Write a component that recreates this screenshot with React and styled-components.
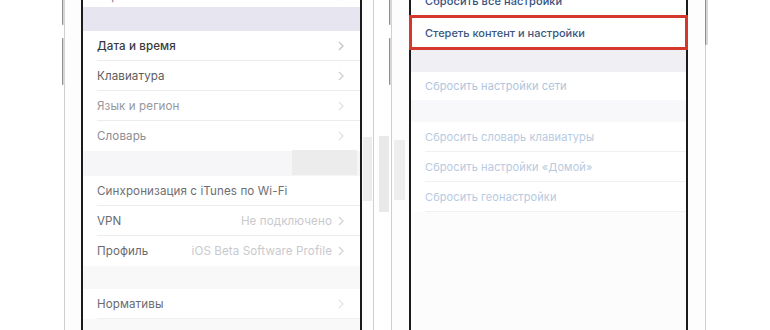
import React from "react";
import styled, { createGlobalStyle } from "styled-components";

const Global = createGlobalStyle`
  html, body { margin: 0; padding: 0; background: #ffffff; }
  body { font-family: Inter, "Noto Sans", "Liberation Sans", sans-serif; }
  * { box-sizing: border-box; }
`;

const Page = styled.div`
  position: relative;
  width: 770px;
  height: 330px;
  overflow: hidden;
  display: flex;
  align-items: flex-start;
  padding-left: 64px;
  gap: 17px;
  background: #ffffff;
`;

const PhoneBody = styled.div`
  position: relative;
  flex: none;
  height: 400px;
  margin-top: -30px;
  padding: 0 ${(p) => p.$right}px 0 ${(p) => p.$left}px;
  background: #fdfdfd;
  border-left: 1px solid #cfcfcf;
  border-right: 1px solid #cfcfcf;
  display: flex;
`;

const SideButton = styled.div`
  position: absolute;
  ${(p) => (p.$side === "left" ? "left: -3px;" : "right: -3px;")}
  top: ${(p) => p.$top}px;
  width: 3px;
  height: ${(p) => p.$h}px;
  background: #d6d6d6;
  border-left: 1px solid #8f8f8f;
  border-radius: 1px;
`;

const Screen = styled.div`
  width: ${(p) => p.$w}px;
  height: 100%;
  border-left: 2px solid #1b1b1b;
  border-right: 2px solid #1b1b1b;
  background: ${(p) => p.$bg || "#ffffff"};
  display: flex;
  flex-direction: column;
  padding-top: ${(p) => p.$offset}px;
  font-size: ${(p) => p.$fs}px;
`;

const Band = styled.div`
  flex: none;
  height: ${(p) => p.$h}px;
  background: ${(p) => p.$bg};
`;

const Row = styled.div`
  position: relative;
  flex: none;
  height: ${(p) => p.$h || 30}px;
  display: flex;
  align-items: center;
  padding: 0 14px 0 14px;
  background: #ffffff;
  letter-spacing: 0.1px;
  color: ${(p) => p.$color};
  font-weight: ${(p) => p.$weight || 400};
  white-space: nowrap;
  &::after {
    content: "";
    display: ${(p) => (p.$sep ? "block" : "none")};
    position: absolute;
    left: 14px;
    right: 0;
    bottom: 0;
    height: 1px;
    background: ${(p) => p.$sepColor || "#ececef"};
  }
`;

const Highlight = styled.div`
  flex: none;
  height: 35px;
  margin: 0 -2px;
  border: 3px solid #d4372c;
  display: flex;
  align-items: center;
  padding-left: 13px;
  background: #ffffff;
  font-weight: 500;
  color: #3b5781;
  white-space: nowrap;
`;

const Label = styled.span`
  flex: 1;
`;

const Value = styled.span`
  color: ${(p) => p.$color || "#c9c9cd"};
  margin-right: 6px;
`;

const Chevron = styled.svg`
  flex: none;
  width: 6px;
  height: 10px;
  margin-right: 2px;
`;

const Artifact = styled.div`
  position: absolute;
  left: ${(p) => p.$x}px;
  top: ${(p) => p.$y}px;
  width: ${(p) => p.$w}px;
  height: ${(p) => p.$h}px;
  background: ${(p) => p.$bg || "#ebebeb"};
  pointer-events: none;
`;

const Chev = ({ color = "#cfcfd3" }) => (
  <Chevron viewBox="0 0 6 10">
    <path d="M1 1 L5 5 L1 9" fill="none" stroke={color} strokeWidth="1.3" />
  </Chevron>
);

const leftRows = [
  { label: "Дата и время", color: "#3a3a3c", weight: 500, chev: "#c4c4c8", sep: true },
  { label: "Клавиатура", color: "#5c5c60", chev: "#d0d0d4", sep: true },
  { label: "Язык и регион", color: "#97979c", chev: "#e2e2e6", sep: true },
  { label: "Словарь", color: "#8e8e93", chev: "#e2e2e6", sep: false },
];

const leftRows2 = [
  { label: "Синхронизация с iTunes по Wi-Fi", color: "#6e6e73", sep: true },
  { label: "VPN", color: "#6a6a6f", value: "Не подключено", chev: "#d4d4d8", sep: true },
  { label: "Профиль", color: "#6a6a6f", value: "iOS Beta Software Profile", chev: "#d4d4d8", sep: false },
];

const rightRows = [
  { label: "Сбросить словарь клавиатуры", sep: true },
  { label: "Сбросить настройки «Домой»", sep: true },
  { label: "Сбросить геонастройки", sep: true },
];

export default function App() {
  return (
    <>
      <Global />
      <Page>
        <PhoneBody $left={16} $right={11}>
          <SideButton $side="left" $top={20} $h={35} />
          <SideButton $side="left" $top={68} $h={47} />
          <Screen $w={281} $offset={15} $fs={11.6}>
            <Row $h={22} $color="#7a7a7e">
              <Label>Ограничения</Label>
              <Value $color="#c8c8cc">Выкл.</Value>
              <Chev />
            </Row>
            <Band $h={24} $bg="#e7e5ef" />
            {leftRows.map((r) => (
              <Row key={r.label} $color={r.color} $weight={r.weight} $sep={r.sep}>
                <Label>{r.label}</Label>
                <Chev color={r.chev} />
              </Row>
            ))}
            <Band $h={25} $bg="#f6f6f8" />
            {leftRows2.map((r) => (
              <Row key={r.label} $color={r.color} $sep={r.sep}>
                <Label>{r.label}</Label>
                {r.value && <Value>{r.value}</Value>}
                {r.chev && <Chev color={r.chev} />}
              </Row>
            ))}
            <Band $h={23} $bg="#f8f8f9" />
            <Row $color="#6a6a6f" $sep $sepColor="#f0f0f2">
              <Label>Нормативы</Label>
              <Chev color="#e4e4e8" />
            </Row>
            <Band $h={40} $bg="#f9f9fa" />
          </Screen>
        </PhoneBody>

        <PhoneBody $left={17} $right={17}>
          <SideButton $side="left" $top={20} $h={35} />
          <SideButton $side="left" $top={68} $h={47} />
          <SideButton $side="right" $top={25} $h={50} />
          <Screen $w={279} $offset={16} $bg="#fcfcfd" $fs={11}>
            <Row $h={29} $color="#34527f" $weight={500}>
              <Label>Сбросить все настройки</Label>
            </Row>
            <Highlight>Стереть контент и настройки</Highlight>
            <Band $h={22} $bg="#f0f0f4" />
            <Row $h={28} $color="#afc5dd">
              <Label>Сбросить настройки сети</Label>
            </Row>
            <Band $h={22} $bg="#f8f8fa" />
            {rightRows.map((r) => (
              <Row key={r.label} $color="#b7cadf" $sep={r.sep} $sepColor="#f1f1f4">
                <Label>{r.label}</Label>
              </Row>
            ))}
          </Screen>
        </PhoneBody>

        <Artifact $x={292} $y={150} $w={65} $h={25} $bg="#ececec" />
        <Artifact $x={363} $y={137} $w={9} $h={64} $bg="#ececec" />
        <Artifact $x={379} $y={136} $w={10} $h={76} $bg="#e9e9e9" />
        <Artifact $x={394} $y={140} $w={11} $h={60} $bg="#eeeeee" />
      </Page>
    </>
  );
}
